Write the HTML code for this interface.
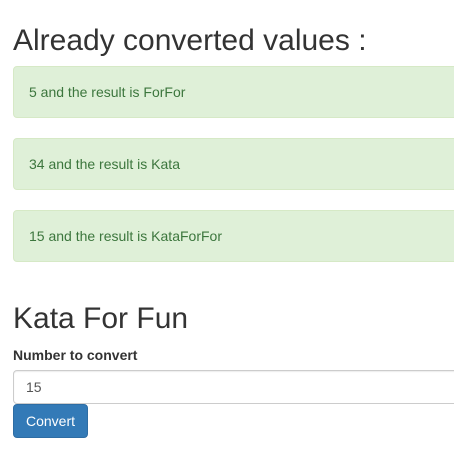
<!DOCTYPE html>
<html><head><style>
body{margin:0;background:#fff;font-family:"Liberation Sans",sans-serif;color:#333;font-size:14px;overflow:hidden;width:454px;height:476px;position:relative}
.a{position:absolute}
h1{position:absolute;margin:0;font-weight:500;font-size:30px;line-height:33px;left:13px}
.al{position:absolute;left:13px;width:460px;height:50px;background:#dff0d8;border:1px solid #d6e9c6;border-radius:4px;color:#3c763d;box-sizing:border-box;height:52px;padding:0 15px;line-height:50px}
</style></head><body>
<h1 style="top:24px">Already converted values :</h1>
<div class="al" style="top:66px">5 and the result is ForFor</div>
<div class="al" style="top:138px">34 and the result is Kata</div>
<div class="al" style="top:210px">15 and the result is KataForFor</div>
<h1 style="top:302px">Kata For Fun</h1>
<div class="a" style="left:13px;top:346px;font-weight:bold;line-height:18px">Number to convert</div>
<div class="a" style="left:13px;top:370px;width:460px;height:34px;box-sizing:border-box;border:1px solid #ccc;border-radius:4px;padding:0 12px;line-height:32px;color:#555;box-shadow:inset 0 1px 1px rgba(0,0,0,.075)">15</div>
<div class="a" style="left:13px;top:404px;width:75px;height:34px;box-sizing:border-box;background:#337ab7;border:1px solid #2e6da4;border-radius:4px;color:#fff;text-align:center;line-height:32px">Convert</div>
</body></html>
